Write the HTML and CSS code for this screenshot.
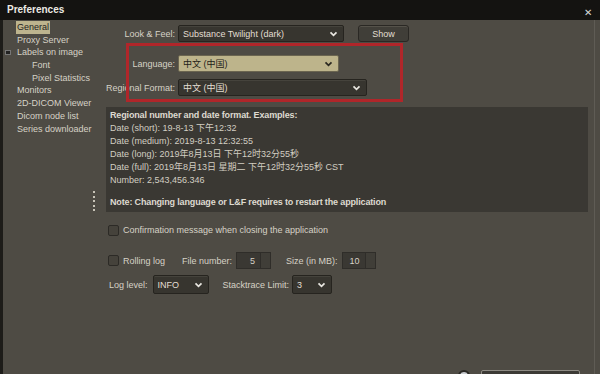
FILE: index.html
```html
<!DOCTYPE html>
<html>
<head>
<meta charset="utf-8">
<link rel="stylesheet" href="styles.css">
</head>
<body>
<div class="window">
  <div class="titlebar">
    <span class="title">Preferences</span>
    <span class="close">✕</span>
  </div>
  <div class="main">
    <div class="sidebar">
      <div class="item"><span class="sel">General</span></div>
      <div class="item">Proxy Server</div>
      <div class="item"><span class="toggle"></span>Labels on image</div>
      <div class="item sub">Font</div>
      <div class="item sub">Pixel Statistics</div>
      <div class="item">Monitors</div>
      <div class="item">2D-DICOM Viewer</div>
      <div class="item">Dicom node list</div>
      <div class="item">Series downloader</div>
      <div class="grip"><i></i><i></i><i></i><i></i><i></i></div>
    </div>
    <div class="panel">
      <div class="row r1">
        <span class="lbl">Look &amp; Feel:</span>
        <div class="combo w-laf"><span>Substance Twilight (dark)</span><svg class="chev" viewBox="0 0 10 7"><polyline points="1.5,1.5 5,5 8.5,1.5"/></svg></div>
        <div class="btn">Show</div>
      </div>
      <div class="row r2">
        <span class="lbl">Language:</span>
        <div class="combo hl w-lang"><span class="cjk">中文 (中国)</span><svg class="chev" viewBox="0 0 10 7"><polyline points="1.5,1.5 5,5 8.5,1.5"/></svg></div>
      </div>
      <div class="row r3">
        <span class="lbl">Regional Format:</span>
        <div class="combo w-reg"><span class="cjk">中文 (中国)</span><svg class="chev" viewBox="0 0 10 7"><polyline points="1.5,1.5 5,5 8.5,1.5"/></svg></div>
      </div>
      <div class="info">
        <div class="b">Regional number and date format. Examples:</div>
        <div>Date (short): 19-8-13 下午12:32</div>
        <div>Date (medium): 2019-8-13 12:32:55</div>
        <div>Date (long): 2019年8月13日 下午12时32分55秒</div>
        <div>Date (full): 2019年8月13日 星期二 下午12时32分55秒 CST</div>
        <div>Number: 2,543,456.346</div>
        <div class="b note">Note: Changing language or L&amp;F requires to restart the application</div>
      </div>
      <div class="row chk-row">
        <span class="cb"></span><span>Confirmation message when closing the application</span>
      </div>
      <div class="row roll">
        <span class="cb"></span><span class="rl">Rolling log</span>
        <span class="fn">File number:</span>
        <div class="spin s1"><span>5</span><b></b></div>
        <span class="sz">Size (in MB):</span>
        <div class="spin s2"><span>10</span><b></b></div>
      </div>
      <div class="row lvl">
        <span>Log level:</span>
        <div class="combo w-info"><span>INFO</span><svg class="chev" viewBox="0 0 10 7"><polyline points="1.5,1.5 5,5 8.5,1.5"/></svg></div>
        <span class="stl">Stacktrace Limit:</span>
        <div class="combo w-st"><span>3</span><svg class="chev" viewBox="0 0 10 7"><polyline points="1.5,1.5 5,5 8.5,1.5"/></svg></div>
      </div>
      <div class="footer">
        <span class="help"></span>
        <span class="fbtn"></span>
      </div>
    </div>
    <div class="mark"></div>
  </div>
</div>
</body>
</html>
```

FILE: styles.css
```css
* { box-sizing: border-box; }
html, body { margin: 0; padding: 0; }
body {
  width: 600px; height: 374px; overflow: hidden;
  background: #4e4b44;
  font-family: "Liberation Sans", Arial, "Noto Sans CJK SC", sans-serif;
  font-size: 9px;
  color: #d6d2c6;
}
.cjk { font-family: "Liberation Sans", "Noto Sans CJK SC", sans-serif; }
.window { width: 600px; height: 374px; display: flex; flex-direction: column; }
.titlebar {
  height: 20px; flex: none; background: #141311;
  display: flex; align-items: center; justify-content: space-between;
  padding: 0 8px 0 7px;
}
.title { color: #eceae4; font-weight: bold; font-size: 10px; margin-top: -2px; }
.close { color: #d8d8d8; font-size: 10px; margin-top: 4px; }
.main {
  flex: 1; display: flex; position: relative;
  border-left: 3px solid #1d1c19; border-right: 5px solid #4e4b44;
  box-shadow: inset -1px 0 0 #5f5c55;
}
.sidebar { width: 103px; flex: none; padding-top: 1px; position: relative; }
.item { height: 12.7px; line-height: 12.7px; padding-left: 14px; white-space: nowrap; position: relative; }
.sel { display: inline-block; padding: 0 1px; margin-left: -1px; background: #bdb48e; color: #24221c; }
.item.sub { padding-left: 29px; }
.toggle {
  position: absolute; left: 2px; top: 4px; width: 6px; height: 5px;
  background: #222; border: 1px solid #777;
}
.grip { position: absolute; left: 90px; top: 171px; display: flex; flex-direction: column; gap: 2.6px; }
.grip i { width: 2px; height: 2px; background: #c8c4b8; display: block; }
.panel { flex: 1; padding-top: 5px; display: flex; flex-direction: column; }
.row { display: flex; align-items: center; white-space: nowrap; }
.lbl { width: 69px; text-align: right; margin-right: 3px; flex: none; }
.combo {
  height: 17px; background: #37352f; border: 1px solid #26241f; border-radius: 2px;
  display: flex; align-items: center; justify-content: space-between;
  padding: 0 5px 0 4px; color: #e2ded2;
  box-shadow: inset 0 1px 0 #45433c;
}
.combo.hl { background: #bdb48b; color: #1f1d18; border-color: #6b6550; box-shadow: none; }
.chev { width: 9px; height: 6px; fill: none; stroke: #e8e6e0; stroke-width: 2; }
.combo.hl .chev { stroke: #2a2820; }
.w-laf { width: 166px; }
.w-lang { width: 161px; }
.w-reg { width: 189px; }
.btn {
  margin-left: 14px; width: 51px; height: 17px; border: 1px solid #2a2824; border-radius: 3px;
  background: #403e38; display: flex; align-items: center; justify-content: center; color: #e2ded2;
  box-shadow: inset 0 1px 0 #55524a;
}
.r2 { margin-top: 13px; }
.r3 { margin-top: 7px; }
.info {
  margin-top: 11px; width: 482px; height: 105px; background: #3a3833;
  padding: 2px 4px 0 4px; line-height: 13px; color: #d2cec2;
}
.info .b { font-weight: bold; color: #dedad0; letter-spacing: -0.15px; }
.info .note { margin-top: 9px; }
.cb {
  width: 11px; height: 11px; border: 1px solid #2c2a26; background: #45423b; border-radius: 2px;
  display: inline-block; margin-right: 4px; margin-left: 2px; flex: none;
}
.chk-row { margin-top: 12px; height: 12px; }
.roll { margin-top: 16px; height: 17px; }
.rl { margin-right: 17px; }
.fn { margin-right: 4px; }
.spin {
  height: 17px; background: #3a3833; border: 1px solid #2f2d29; display: flex; align-items: center;
}
.spin span { flex: 1; text-align: right; padding-right: 5px; }
.spin b { width: 10px; height: 15px; border-left: 1px solid #2f2d29; background: #403e38; }
.s1 { width: 35px; margin-right: 15px; }
.s2 { width: 34px; }
.sz { margin-right: 4px; }
.lvl { margin-top: 6px; height: 19px; padding-left: 3px; }
.lvl .combo { height: 19px; }
.w-info { width: 56px; margin-left: 5px; margin-right: 14px; }
.stl { margin-right: 3px; }
.w-st { width: 40px; }
.footer { margin-top: 76px; display: flex; align-items: flex-start; padding-left: 352px; }
.help { width: 12px; height: 12px; border-radius: 50%; background: #c9ccd0; border: 2px solid #2a2824; margin-right: 11px; }
.fbtn { width: 99px; height: 12px; border: 1px solid #8e8b84; background: #3c3a35; border-radius: 2px; }
.mark {
  position: absolute; left: 123px; top: 23px; width: 277px; height: 59px;
  border: 3px solid #b0262a;
}
```
